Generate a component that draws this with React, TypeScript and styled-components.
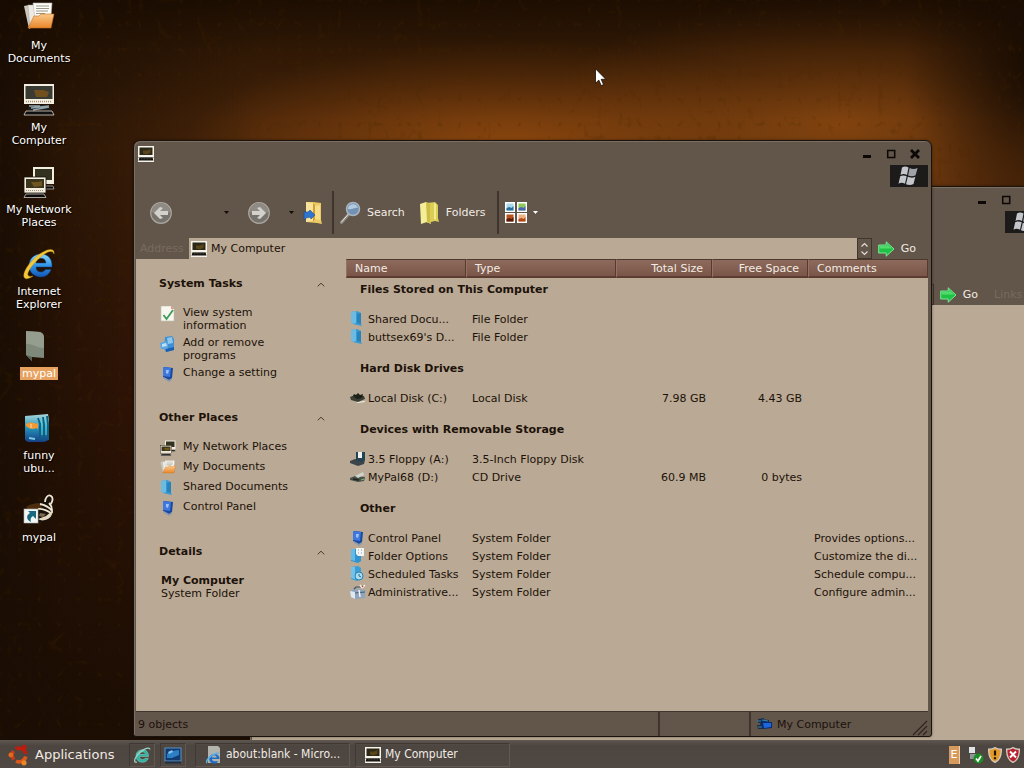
import React from "react";
import styled, { createGlobalStyle } from "styled-components";

const color = {
  chrome: "#62554a",
  chromeDark: "#40352c",
  edge: "#1b120c",
  paper: "#baa994",
  ink: "#1c120a",
  light: "#f1ebe4",
};

const GlobalStyle = createGlobalStyle`
  *, *::before, *::after { box-sizing: border-box; }
  html, body, #root { height: 100%; margin: 0; }
  body { overflow: hidden; background: #170b02; }
  body, button, input, table {
    font-family: "DejaVu Sans", Verdana, sans-serif;
    font-size: 11px;
    line-height: 13px;
    color: ${color.ink};
  }
  button { background: none; border: 0; padding: 0; margin: 0; cursor: default; }
  a { color: inherit; text-decoration: none; }
  svg { display: block; flex: none; }
  h2 { margin: 0; font-size: 11px; line-height: 16px; font-weight: bold; }
`;

/* ---------- icons ---------- */

type IconProps = { size?: number };

const Computer = ({ size = 16 }: IconProps) => (
  <svg width={size} height={size} viewBox="0 0 32 32" aria-hidden="true">
    <rect x="0" y="0" width="32" height="22" fill="#f6f3ea" />
    <rect x="3" y="3" width="26" height="15" fill="#2b2817" />
    <path d="M10 9h8l7-3v8l-8 3-7-2z" fill="#6b4f1c" opacity=".75" />
    <rect x="0" y="23" width="32" height="9" fill="#f6f3ea" />
    <path d="M3 23h26l2 6H1z" fill="#15130f" />
    <path d="M6 25.500h20" stroke="#6d6a62" strokeWidth="1" strokeDasharray="2 1" />
  </svg>
);

const Laptop = ({ size = 32 }: IconProps) => (
  <svg width={size} height={size} viewBox="0 0 32 32" aria-hidden="true">
    <rect x="1" y="0" width="30" height="20" fill="#f3eee2" />
    <rect x="2.500" y="2" width="27" height="13" fill="#3a3b32" />
    <path d="M11 6h9l6 2-2 5H13z" fill="#8a5a14" opacity=".7" />
    <path d="M3 17.500h26" stroke="#a98d6b" strokeWidth="1.500" strokeDasharray="1 1" />
    <path d="M8 21h17l3 5H4z" fill="#1c1f20" />
    <path d="M8 24l18-2M10 26l16-3M6 22h11" stroke="#93a3aa" strokeWidth="1.300" />
    <path d="M3 27h26l2 4H1z" fill="#101010" stroke="#dcd7cc" strokeWidth=".8" />
  </svg>
);

const Network = ({ size = 16 }: IconProps) => (
  <svg width={size} height={size} viewBox="0 0 32 32" aria-hidden="true">
    <path d="M20 20h10l1 3H19z" fill="#0d0c0a" stroke="#ddd" strokeWidth=".6" />
    <rect x="10" y="1" width="21" height="17" fill="#f3eee2" />
    <rect x="12" y="3" width="17" height="11" fill="#33311f" />
    <rect x="1" y="11" width="22" height="16" fill="#f3eee2" stroke="#17120c" strokeWidth=".8" />
    <rect x="3" y="13" width="18" height="9" fill="#3b351d" />
    <path d="M8 16h7l4-1v5l-8 1z" fill="#86641f" opacity=".7" />
    <path d="M3 24.500h18" stroke="#a98d6b" strokeDasharray="1 1" />
    <path d="M3 28h18l2 3.500H1z" fill="#0d0c0a" stroke="#ddd" strokeWidth=".7" />
  </svg>
);

const Documents = ({ size = 16 }: IconProps) => (
  <svg width={size} height={size} viewBox="0 0 32 32" aria-hidden="true">
    <defs>
      <linearGradient id="docFolder" x1="0" y1="0" x2="0" y2="1">
        <stop offset="0" stopColor="#fbc98b" />
        <stop offset="1" stopColor="#e8862a" />
      </linearGradient>
    </defs>
    <path d="M1 4l5-1 3 22-3 2z" fill="#c9c7bf" />
    <path d="M5 3l9 0-1 20-6 3z" fill="#eceae3" stroke="#a9a59a" strokeWidth=".5" />
    <path d="M10 1h19l-1 13-16 3z" fill="#fdfcf7" stroke="#bdb8ac" strokeWidth=".6" />
    <path d="M13 4h13M13 6.500h13M13 9h12M13 11.500h9" stroke="#9b968b" strokeWidth="1" />
    <path d="M11 14l5 0 2-2h13l-3 14H5z" fill="url(#docFolder)" stroke="#c5701e" strokeWidth=".6" />
  </svg>
);

const Explorer = ({ size = 32 }: IconProps) => (
  <svg width={size} height={size} viewBox="0 0 32 32" aria-hidden="true">
    <defs>
      <linearGradient id="ieBlue" x1="0" y1="0" x2="0" y2="1">
        <stop offset="0" stopColor="#8fdcff" />
        <stop offset=".5" stopColor="#2e93e6" />
        <stop offset="1" stopColor="#1457b5" />
      </linearGradient>
    </defs>
    <path
      d="M29 19H13c0 3 2 5 5 5 2 0 3.500-1 4.500-2.500H28C26.500 26 23 29 18 29 11 29 6 24 6 17.500S11 6 18 6s11.500 5 11 13zM13 15h10c-.3-3-2-4.700-5-4.700S13.400 12 13 15z"
      fill="url(#ieBlue)"
      stroke="#0e3f86"
      strokeWidth=".5"
    />
    <path
      d="M31 6c1-5-4-6-11-2C9 10-1 24 1 29c1 3 5 2 9-1-4 1-6 0-5-3C7 19 17 8 25 4c3-1 5-1 6 2z"
      fill="#f3c73a"
      stroke="#b98a14"
      strokeWidth=".4"
    />
  </svg>
);

const GreyFolder = () => (
  <svg width="32" height="32" viewBox="0 0 32 32" aria-hidden="true">
    <path d="M3 1l14 1c3 1 4 3 4 6v20l-12-1v4l-6-6z" fill="#7f897b" />
    <path d="M3 1l14 1c3 1 4 3 4 6v10C13 18 8 13 3 14z" fill="#9aa394" opacity=".8" />
    <path d="M9 27v4l-6-6z" fill="#566053" />
  </svg>
);

const Picture = () => (
  <svg width="32" height="32" viewBox="0 0 32 32" aria-hidden="true">
    <defs>
      <linearGradient id="fishSea" x1="0" y1="0" x2="0" y2="1">
        <stop offset="0" stopColor="#a9d6da" />
        <stop offset=".5" stopColor="#2393b8" />
        <stop offset="1" stopColor="#173d86" />
      </linearGradient>
    </defs>
    <path d="M2 4l23-2 1 6v20l-5 2H5l-3-2z" fill="url(#fishSea)" />
    <path d="M15 6l2 6v16M20 5l1 8v16M24 4l1 8v15" fill="none" stroke="#0c5f80" strokeWidth="1.800" />
    <path d="M18 7l1 6v10M22 6l1 7v10" stroke="#5fd0dc" fill="none" strokeWidth="1" />
    <path d="M3 12c3-2 7-2 10 0l2-1v6l-2-1c-3 2-7 1-10-2z" fill="#f19a35" />
    <path d="M8 12v4" stroke="#ffe0b0" />
    <path d="M6 26l6 1" stroke="#77cbe0" strokeWidth="2" />
  </svg>
);

const Raccoon = () => (
  <svg width="32" height="32" viewBox="0 0 32 32" aria-hidden="true">
    <path d="M3 13c4-4 12-6 19-5l2-6c3-1 5 1 5 5v16c-5 6-14 6-18 1z" fill="#17120c" />
    <path d="M3 13c4-3 9-4 14-4l2 5-14 2z" fill="#4d2b0d" />
    <path d="M22 8c0-4 3-8 6-6 3 2 1 7-1 9" fill="none" stroke="#efe6d2" strokeWidth="1.800" />
    <path d="M17 10c5 1 9 3 12 7 0-4-1-6-3-8M15 15c4-1 8 1 13 4" fill="none" stroke="#efe6d2" strokeWidth="1.800" />
    <path d="M29 17c1 4-2 8-7 9-3 1-5 0-7-1l8-3z" fill="#e2d8c2" />
    <path d="M17 19l6 1-3 3-4-1z" fill="#7d6a4a" />
    <rect x="1" y="15" width="14" height="14" fill="#f4f6f4" stroke="#a8b4b4" strokeWidth=".6" />
    <path d="M5 17h8v8l-3-3c-2 1-3 3-2 6-5-2-5-7-1-9z" fill="#196a80" />
  </svg>
);

const BlueFolder = () => (
  <svg width="16" height="16" viewBox="0 0 16 16" aria-hidden="true">
    <path d="M1 1l6-1 4 2v11l1 2-5-1-4-1-2-2z" fill="#3a9bd3" />
    <path d="M1 1l5-1v12l-3 1-2-2z" fill="#6ebbe2" />
    <path d="M7 3l4-1v11l-4-1z" fill="#2583be" />
  </svg>
);

const ControlPanel = () => (
  <svg width="16" height="16" viewBox="0 0 16 16" aria-hidden="true">
    <path d="M4 1l9 1-1 10-3 2-6-3z" fill="#17499f" />
    <path d="M3 1l8 1-1 9-7-1z" fill="#3e78dd" />
    <path d="M6 4l3 0-1 4-2-1z" fill="#9cc2f6" />
    <path d="M4 12l5 3 3-2" stroke="#8c98ae" strokeWidth="1.500" fill="none" />
  </svg>
);

const CheckSheet = () => (
  <svg width="16" height="16" viewBox="0 0 16 16" aria-hidden="true">
    <path d="M1 0h10l3 3v12H1z" fill="#f7f7f0" stroke="#c4bfb2" strokeWidth=".6" />
    <path d="M11 0l3 3h-3z" fill="#e39086" />
    <path d="M3.500 9l3 4L13 4" fill="none" stroke="#3f9a55" strokeWidth="1.800" />
  </svg>
);

const Programs = () => (
  <svg width="16" height="16" viewBox="0 0 16 16" aria-hidden="true">
    <path d="M5 1l7-1 2 3v11l-8 2-2-3z" fill="#3f8fd6" />
    <path d="M7 2l5-1 1 6-5 1z" fill="#8fc6ec" />
    <path d="M0 7l6-2 2 2v6l-7 0z" fill="#5ba6e0" />
    <path d="M6 13l8-2v3l-8 2z" fill="#1b5fae" />
    <path d="M2 8l4-1 1 3-5 1z" fill="#bfe0f5" />
  </svg>
);

const FolderOptions = () => (
  <svg width="16" height="16" viewBox="0 0 16 16" aria-hidden="true">
    <path d="M1 1l8 0 2 1v11l-3 2-7-2z" fill="#2e95d1" />
    <path d="M1 1h4v12l-4-1z" fill="#63bbe6" />
    <path d="M6 0h8v8H8l-2-2z" fill="#f3f5f2" />
    <path d="M8 2h1M11 2h1M8 5h1M11 5h1" stroke="#7fa3c4" strokeWidth="1.200" />
  </svg>
);

const Scheduled = () => (
  <svg width="16" height="16" viewBox="0 0 16 16" aria-hidden="true">
    <path d="M1 1l7-1 3 2v11l-4 2-6-2z" fill="#3b9fd6" />
    <path d="M1 1l4 0v12l-4-1z" fill="#74c2e8" />
    <circle cx="9" cy="10" r="4" fill="#a9dbf1" stroke="#2781b5" />
    <path d="M9 8v2l2 1" stroke="#2c6c92" fill="none" />
  </svg>
);

const Admin = () => (
  <svg width="16" height="16" viewBox="0 0 16 16" aria-hidden="true">
    <path d="M0 7l4-2 11 1v8l-10 1-4-2z" fill="#8fa4bd" />
    <path d="M0 7l5 1v7l-4-2z" fill="#dfe8ef" />
    <path d="M4 5l2-2h5l1 2" fill="none" stroke="#3c4e66" strokeWidth="1.200" />
    <path d="M5 9l10-1" stroke="#3f5c80" />
    <path d="M9 6l1 7" stroke="#f5f5f5" strokeWidth="1.500" />
    <path d="M10 1l2 3 3-3" stroke="#f1eeea" fill="none" strokeWidth="1.500" />
    <path d="M12 3l1-1" stroke="#c33f37" strokeWidth="1.200" />
  </svg>
);

type DriveKind = "disk" | "floppy" | "cd";

const Drive = ({ kind }: { kind: DriveKind }) => (
  <svg width="16" height="16" viewBox="0 0 16 16" aria-hidden="true">
    {kind === "disk" && (
      <>
        <path d="M6 12l9-1v1l-7 1z" fill="#e8efe2" />
        <path d="M0 7l5-2 9 1 1 3-7 3-7-2z" fill="#3b3f33" />
        <path d="M3 6l1-2 2 1 2-2 2 2 3-1-1 4-5 1z" fill="#1d2016" />
      </>
    )}
    {kind === "floppy" && (
      <>
        <path d="M0 10l5-2 10 1-1 4-6 2-8-3z" fill="#3c464a" />
        <path d="M6 1h9v8l-4 2-5-1z" fill="#27434f" />
        <path d="M8 1h4v6H8z" fill="#eef2f2" />
      </>
    )}
    {kind === "cd" && (
      <>
        <path d="M0 9l5-2 10 1-1 4-6 1-8-2z" fill="#4b5148" />
        <path d="M5 7l8-4 1 3-6 3z" fill="#cdd5cc" />
        <path d="M3 10l6 1" stroke="#1f241f" strokeWidth="1.500" />
        <path d="M11 11l3-1" stroke="#6fc07a" />
      </>
    )}
  </svg>
);

const NavArrow = ({ forward }: { forward?: boolean }) => (
  <svg width="22" height="22" viewBox="0 0 22 22" aria-hidden="true">
    <circle cx="11" cy="11" r="10.300" fill="#77736c" stroke="#aaa7a0" strokeWidth="1.200" />
    <path d="M2 10a9 9 0 0 1 18 0c-5 3-13 3-18 0z" fill="#8f8b84" />
    <path
      d={forward ? "M4 9h8L9 6l3-1 6 6-6 6-3-1 3-3H4z" : "M18 9h-8l3-3-3-1-6 6 6 6 3-1-3-3h8z"}
      fill="#d3d1cc"
    />
  </svg>
);

const UpFolder = () => (
  <svg width="20" height="24" viewBox="0 0 20 24" aria-hidden="true">
    <path d="M3 1l7 0 8 1v17l1 4-5-1-11-1z" fill="#eecb62" />
    <path d="M3 1l7 1v18l-7 1z" fill="#f8e29a" />
    <path d="M12 5l5-1v15l-5-1z" fill="#f7dd8a" />
    <path d="M10 2l2 2v14l-2 3z" fill="#cf9f36" />
    <path d="M1 11h4l2-2 5 5-4 4-1-2-4 1-2 2z" fill="#2f74cf" stroke="#1a4c98" strokeWidth=".6" />
  </svg>
);

const Magnifier = () => (
  <svg width="21" height="24" viewBox="0 0 21 24" aria-hidden="true">
    <path d="M9 13L1.500 21.500" stroke="#8e8c87" strokeWidth="3" strokeLinecap="round" />
    <path d="M8.500 13L1.500 21" stroke="#e6e4df" strokeWidth="1" strokeLinecap="round" />
    <circle cx="13" cy="8" r="6.500" fill="#7392b3" stroke="#a9b4bf" strokeWidth="1.500" />
    <path d="M8 8c0-5 8-7 10-1-3-1-6 2-10 1z" fill="#b3c9de" />
  </svg>
);

const YellowFolders = () => (
  <svg width="20" height="24" viewBox="0 0 20 24" aria-hidden="true">
    <path d="M7 2l8-1 3 3v13l1 4-4-1-8 2z" fill="#d9cd55" />
    <path d="M0 3l6-2 4 2v16l1 4-4-2-6 2z" fill="#f5ee98" />
    <path d="M6 1l4 2v16l1 4-4-2z" fill="#cdbc45" />
    <path d="M14 2l2 1v16l-2-1z" fill="#f2ea8e" />
  </svg>
);

const Views = () => (
  <svg width="22" height="21" viewBox="0 0 22 21" aria-hidden="true">
    {[
      [0, 0, "#a9d8ec", "#2a6f9c"],
      [12, 0, "#8cc95b", "#4c62b9"],
      [0, 11, "#b8511d", "#571d0b"],
      [12, 11, "#ecb083", "#b0481a"],
    ].map(([x, y, a, b]) => (
      <g key={`${x}-${y}`} transform={`translate(${x} ${y})`}>
        <rect width="10" height="10" fill="#fff" />
        <rect x="1.500" y="1.500" width="7" height="7" fill={a as string} />
        <path d="M1.500 8.500V6l3-1 2 1 2-2v4.500z" fill={b as string} />
      </g>
    ))}
  </svg>
);

const GoArrow = () => (
  <svg width="17" height="16" viewBox="0 0 17 16" aria-hidden="true">
    <path d="M.7 4h7.500V.8L16 8l-7.800 7.200V12H.7z" fill="#1fc246" stroke="#7fe596" strokeWidth="1" />
    <path d="M1.500 5h7.500V3l5 4.500H1.500z" fill="#54d96f" />
  </svg>
);

const WinFlag = () => (
  <svg width="22" height="20" viewBox="0 0 22 20" aria-hidden="true">
    <g fill="#c3c6ca">
      <path d="M4 1.500c2.500-1.500 4.500-1 6.500 0L9 9c-2-1-4.500-1.500-6.500 0z" />
      <path d="M11.600 2c2.500 1.200 5 1.400 8 0l-2 7.300c-2.500 1.300-5 1.200-7.500.2z" fill="#9ea1a6" />
      <path d="M2.200 10.300c2.200-1.400 4.500-1 6.500 0L7 17.700c-2-1-4.300-1.500-6.500 0z" />
      <path d="M9.800 10.800c2.500 1 5 1.200 7.500 0L15.500 18c-2.500 1.300-5 1.200-7.500.2z" />
    </g>
  </svg>
);

const UbuntuLogo = () => (
  <svg width="22" height="22" viewBox="0 0 22 22" aria-hidden="true">
    <g fill="none" strokeWidth="3.600">
      <path d="M7.500 5A7 7 0 0 1 17.800 10" stroke="#b8200f" />
      <path d="M17.800 12.500A7 7 0 0 1 8 17.200" stroke="#d9581a" />
      <path d="M6 15.500A7 7 0 0 1 5.500 7" stroke="#c63d16" />
    </g>
    <circle cx="2.800" cy="11" r="2.400" fill="#e26a1c" />
    <circle cx="16" cy="3.400" r="2.600" fill="#b81d12" />
    <circle cx="16" cy="18.800" r="2.600" fill="#e9872a" />
  </svg>
);

const Desk = () => (
  <svg width="18" height="18" viewBox="0 0 18 18" aria-hidden="true">
    <rect x="1" y="2" width="16" height="13" fill="#123a70" stroke="#5a93c4" strokeWidth="1" />
    <path d="M3 8l4-3 8-1v5l-7 3H3z" fill="#2c7fc4" />
    <path d="M4 6l4-2 1 2-4 2z" fill="#86c2e8" />
    <path d="M1 16.500h16" stroke="#1d2e40" strokeWidth="2" />
  </svg>
);

const PageIE = () => (
  <svg width="17" height="18" viewBox="0 0 17 18" aria-hidden="true">
    <path d="M3 0h10l2 2v15H3z" fill="#b3b4ae" />
    <path d="M14.500 13H7c0 1.400 1 2.200 2.300 2.200h4C12.500 16.800 11 17.500 9.200 17.500 6 17.500 4.200 15.500 4.200 12.700S6 8 9.200 8s5.500 2 5.300 5zM7 11.400h4.700C11.500 10.200 10.700 9.600 9.300 9.600 8 9.600 7.200 10.200 7 11.400z" fill="#1f6cc4" />
    <path d="M2 17C0 14 8 7 14 7" fill="none" stroke="#5fb2e8" strokeWidth="1.400" />
  </svg>
);

const TaskIE = () => (
  <svg width="18" height="18" viewBox="0 0 18 18" aria-hidden="true">
    <path d="M15.500 10.500H6.500c0 2 1.200 3 3 3 1.300 0 2-.5 2.600-1.300h3.200C14.400 15 12.300 16.300 9.500 16.300 5.600 16.300 3 13.800 3 10s2.600-6.200 6.500-6.200 6.300 2.700 6 6.700zM6.600 8.300h5.800C12.200 6.800 11.200 6 9.500 6 7.900 6 6.900 6.800 6.600 8.300z" fill="#2fb5a4" stroke="#b5ddd2" strokeWidth=".4" />
    <path d="M17 3.500C16.500 0 7 4 3 11c-2 3-2 6 1 5" fill="none" stroke="#9ad6c4" strokeWidth="1.300" />
  </svg>
);

const TrayNet = () => (
  <svg width="16" height="18" viewBox="0 0 16 18" aria-hidden="true">
    <rect x="1" y="1" width="6" height="6" fill="#dfe3e6" />
    <path d="M2 8h6v5H2z" fill="#8f9499" />
    <circle cx="10.500" cy="12.500" r="5" fill="#1c8c25" />
    <path d="M8 12.500l2 2.500 3-5" fill="none" stroke="#fff" strokeWidth="1.600" />
  </svg>
);

const Shield = ({ alert }: { alert?: boolean }) => (
  <svg width="14" height="16" viewBox="0 0 14 16" aria-hidden="true">
    <path d="M7 .7c2 1.300 4 1.700 6.300 1.600C13.500 9 12 13 7 15.400 2 13 .5 9 .7 2.300 3 2.400 5 2 7 .7z" fill={alert ? "#b8202f" : "#e59a2a"} stroke="#d3c8bb" strokeWidth="1.400" />
    {alert ? (
      <path d="M4 4.500l6 6M10 4.500l-6 6" stroke="#fff" strokeWidth="2" />
    ) : (
      <path d="M7 3.500v5M7 10.300v2" stroke="#1e1405" strokeWidth="2.200" />
    )}
  </svg>
);

const StatusComputer = () => (
  <svg width="16" height="14" viewBox="0 0 16 14" aria-hidden="true">
    <path d="M1 2l6-1v5H1zM0 8h6v4H1z" fill="#1f2f3f" />
    <path d="M4 2l8 1 0 2 3 0 0 6-9 1-3-3z" fill="#0e2b66" />
    <path d="M6 6l8 0 0 4-7 1z" fill="#1c66e0" />
    <path d="M0 4l4 0M1 10h4M5 3l6 1" stroke="#3b86a9" strokeWidth="1.200" />
  </svg>
);

const Caret = ({ tone = "#120c07" }: { tone?: string }) => (
  <svg width="5" height="3" viewBox="0 0 5 3" aria-hidden="true">
    <path d="M0 0h5L2.500 3z" fill={tone} />
  </svg>
);

const Chevron = () => (
  <svg width="8" height="5" viewBox="0 0 8 5" aria-hidden="true">
    <path d="M.7 4.300L4 1.200l3.300 3.100" fill="none" stroke="#4b3e33" strokeWidth="1" />
  </svg>
);

/* ---------- desktop ---------- */

const Screen = styled.div`
  height: 100vh;
  display: flex;
  flex-direction: column;
  overflow: hidden;
`;

const Desktop = styled.main`
  position: relative;
  flex: 1;
  min-height: 0;
  overflow: hidden;
  background:
    linear-gradient(to bottom, rgba(22, 10, 1, 0.75) 0, rgba(22, 10, 1, 0.3) 50px, rgba(22, 10, 1, 0) 120px),
    linear-gradient(to right, #1a0d03 0, rgba(26, 13, 3, 0.7) 60px, rgba(26, 13, 3, 0) 260px),
    radial-gradient(ellipse 140px 160px at 102% 70px, #150a02 0, rgba(21, 10, 2, 0) 100%),
    radial-gradient(ellipse 300px 130px at 82% 125px, #81430f 0, rgba(129, 67, 15, 0) 100%),
    radial-gradient(ellipse 330px 110px at 50% 150px, #8c470e 0, rgba(140, 71, 14, 0) 100%),
    linear-gradient(to bottom, #321a05 0, #4b260a 150px, #3a1607 420px, #1f0e03 700px);
`;

const Leather = styled.svg`
  position: absolute;
  inset: 0;
  width: 100%;
  height: 100%;
  opacity: 0.3;
`;

const IconColumn = styled.nav`
  position: relative;
  width: 78px;
  padding-top: 1px;
  display: flex;
  flex-direction: column;
`;

const DesktopButton = styled.button`
  height: 82px;
  padding-top: 1px;
  display: flex;
  flex-direction: column;
  align-items: center;
  gap: 5px;
  color: #fff;
`;

const DesktopLabel = styled.span<{ $selected?: boolean }>`
  padding: 0 2px;
  white-space: pre-line;
  text-align: center;
  text-shadow: ${(p) => (p.$selected ? "none" : "1px 1px 1px #000")};
  background: ${(p) => (p.$selected ? "#e7a260" : "transparent")};
`;

const Pointer = styled.svg`
  position: absolute;
  left: 595px;
  top: 68px;
`;

/* ---------- window ---------- */

const Frame = styled.section<{ $back?: boolean }>`
  position: absolute;
  left: ${(p) => (p.$back ? 249 : 133)}px;
  right: ${(p) => (p.$back ? -23 : 92)}px;
  top: ${(p) => (p.$back ? 186 : 140)}px;
  bottom: ${(p) => (p.$back ? -43 : 3)}px;
  display: flex;
  flex-direction: column;
  padding: 1px 3px 0 2px;
  border: 1px solid ${color.edge};
  border-radius: 7px 7px 3px 3px;
  background: ${color.chrome};
  box-shadow: inset 1px 1px 0 #7b6e62, 0 0 3px rgba(0, 0, 0, 0.4);
`;

const TitleBar = styled.header`
  height: 23px;
  padding: 0 7px 0 2px;
  display: flex;
  align-items: center;
  justify-content: space-between;
`;

const TitleButtons = styled.div`
  display: flex;
  gap: 12px;
`;

const TitleButton = styled.button`
  width: 12px;
  height: 12px;
`;

const MenuRow = styled.div`
  height: 22px;
  display: flex;
  justify-content: flex-end;
`;

const LogoBox = styled.div`
  width: 38px;
  display: grid;
  place-items: center;
  background: #1d1b1a;
`;

const Toolbar = styled.div`
  height: 51px;
  padding-left: 14px;
  display: flex;
  align-items: center;
`;

const ToolButton = styled.button<{ $gap?: number }>`
  display: flex;
  align-items: center;
  gap: 6px;
  margin-left: ${(p) => p.$gap ?? 0}px;
  color: ${color.light};
`;

const Divider = styled.span<{ $gap?: number }>`
  align-self: stretch;
  width: 2px;
  margin: 4px 0 4px ${(p) => p.$gap ?? 0}px;
  background: ${color.chromeDark};
`;

const AddressBar = styled.form`
  height: 21px;
  display: flex;
  align-items: center;
`;

const Faded = styled.label`
  width: 53px;
  padding-left: 4px;
  color: #776b5f;
`;

const AddressField = styled.div`
  flex: 1;
  min-width: 0;
  align-self: stretch;
  display: flex;
  align-items: center;
  gap: 4px;
  padding-left: 2px;
  background: ${color.paper};
`;

const AddressInput = styled.input`
  flex: 1;
  min-width: 0;
  padding: 0;
  border: 0;
  outline: 0;
  background: transparent;
`;

const Spinner = styled.button`
  width: 15px;
  align-self: stretch;
  display: grid;
  place-items: center;
  border: 1px solid ${color.chromeDark};
`;

const GoButton = styled.button`
  display: flex;
  align-items: center;
  gap: 6px;
  padding: 0 12px 0 6px;
  color: ${color.light};
`;

const Body = styled.div`
  flex: 1;
  min-height: 0;
  display: flex;
  background: ${color.paper};
`;

const StatusBar = styled.footer`
  height: 25px;
  display: flex;
  align-items: stretch;
  border-top: 1px solid ${color.chromeDark};
`;

const StatusText = styled.span<{ $width?: number }>`
  flex: ${(p) => (p.$width ? `0 0 ${p.$width}px` : "1")};
  display: flex;
  align-items: center;
  gap: 4px;
  padding-left: ${(p) => (p.$width ? 6 : 2)}px;
  border-left: ${(p) => (p.$width ? `2px solid ${color.chromeDark}` : "0")};
`;

const Grip = styled.svg`
  align-self: flex-end;
`;

/* ---------- task pane ---------- */

const Pane = styled.aside`
  flex: none;
  width: 210px;
  padding: 17px 21px 0 23px;
  display: flex;
  flex-direction: column;
  gap: 28px;
`;

const PaneHeading = styled.div`
  display: flex;
  justify-content: space-between;
  align-items: center;
  margin-bottom: 14px;
`;

const PaneList = styled.ul`
  margin: 0;
  padding: 0 0 0 1px;
  list-style: none;
  display: flex;
  flex-direction: column;
  gap: 4px;
`;

const PaneLink = styled.a`
  min-height: 16px;
  display: flex;
  gap: 7px;
`;

const PaneLabel = styled.span`
  width: 112px;
`;

const Details = styled.p`
  margin: 0;
  padding-left: 2px;
`;

/* ---------- file list ---------- */

const ListArea = styled.div`
  flex: 1;
  min-width: 0;
`;

const FileTable = styled.table`
  width: 100%;
  table-layout: fixed;
  border-collapse: separate;
  border-spacing: 0;
  white-space: nowrap;
`;

const Column = styled.col<{ $width?: number }>`
  width: ${(p) => (p.$width ? `${p.$width}px` : "auto")};
`;

const HeadCell = styled.th<{ $right?: boolean }>`
  height: 19px;
  padding: 1px 8px 0;
  text-align: ${(p) => (p.$right ? "right" : "left")};
  font-weight: normal;
  color: ${color.light};
  background: linear-gradient(#8d6a5b, #7a5648);
  border-top: 1px solid #4d382e;
  border-bottom: 2px solid #5c3c30;
  border-left: 1px solid #957263;
  border-right: 1px solid #553a2f;
`;

const GroupCell = styled.th<{ $first?: boolean }>`
  padding: ${(p) => (p.$first ? 3 : 14)}px 0 11px 14px;
  line-height: 18px;
  text-align: left;
`;

const Cell = styled.td<{ $right?: boolean }>`
  height: 18px;
  padding: 0 6px;
  text-align: ${(p) => (p.$right ? "right" : "left")};
`;

const NameCell = styled(Cell)`
  padding: 0 0 0 4px;
`;

const FileName = styled.span`
  display: flex;
  align-items: center;
  gap: 2px;
`;

/* ---------- taskbar ---------- */

const Taskbar = styled.footer`
  flex: none;
  height: 28px;
  display: flex;
  align-items: center;
  padding: 0 4px 0 8px;
  background: linear-gradient(#5b534d, #4c4540 5px, #4f4843);
  border-top: 1px solid #5f564f;
`;

const StartButton = styled.button`
  display: flex;
  align-items: center;
  gap: 5px;
  width: 121px;
  font-size: 13px;
  line-height: 16px;
  color: ${color.light};
`;

const TaskGroup = styled.div<{ $gap: number }>`
  display: flex;
  gap: ${(p) => p.$gap}px;
  margin-right: 9px;
`;

const TaskButton = styled.button<{ $wide?: boolean }>`
  width: ${(p) => (p.$wide ? 155 : 26)}px;
  height: 24px;
  padding: 0 ${(p) => (p.$wide ? 9 : 3)}px;
  display: flex;
  align-items: center;
  gap: 4px;
  font-family: "DejaVu Sans Condensed", "DejaVu Sans", sans-serif;
  font-size: 12px;
  color: ${color.light};
  white-space: nowrap;
  border: 1px solid #635950;
  border-left-color: #3f3833;
  border-top-color: #3f3833;
`;

const Tray = styled.div`
  margin-left: auto;
  display: flex;
  align-items: center;
  gap: 4px;
`;

const Language = styled.button`
  width: 11px;
  height: 18px;
  margin-right: 4px;
  color: #fff;
  background: #d69a5c;
  border-right: 1px solid #efd0ab;
`;

/* ---------- data ---------- */

const shortcuts: { label: string; icon: React.ReactNode; selected?: boolean }[] = [
  { label: "My\nDocuments", icon: <Documents size={32} /> },
  { label: "My\nComputer", icon: <Laptop /> },
  { label: "My Network\nPlaces", icon: <Network size={32} /> },
  { label: "Internet\nExplorer", icon: <Explorer /> },
  { label: "mypal", icon: <GreyFolder />, selected: true },
  { label: "funny\nubu...", icon: <Picture /> },
  { label: "mypal", icon: <Raccoon /> },
];

const paneSections = [
  {
    title: "System Tasks",
    items: [
      { label: "View system information", icon: <CheckSheet /> },
      { label: "Add or remove programs", icon: <Programs /> },
      { label: "Change a setting", icon: <ControlPanel /> },
    ],
  },
  {
    title: "Other Places",
    items: [
      { label: "My Network Places", icon: <Network /> },
      { label: "My Documents", icon: <Documents /> },
      { label: "Shared Documents", icon: <BlueFolder /> },
      { label: "Control Panel", icon: <ControlPanel /> },
    ],
  },
];

type FileRow = {
  name: string;
  type: string;
  icon: React.ReactNode;
  size?: string;
  free?: string;
  comment?: string;
};

const groups: { title: string; rows: FileRow[] }[] = [
  {
    title: "Files Stored on This Computer",
    rows: [
      { name: "Shared Docu...", type: "File Folder", icon: <BlueFolder /> },
      { name: "buttsex69's D...", type: "File Folder", icon: <BlueFolder /> },
    ],
  },
  {
    title: "Hard Disk Drives",
    rows: [
      { name: "Local Disk (C:)", type: "Local Disk", icon: <Drive kind="disk" />, size: "7.98 GB", free: "4.43 GB" },
    ],
  },
  {
    title: "Devices with Removable Storage",
    rows: [
      { name: "3.5 Floppy (A:)", type: "3.5-Inch Floppy Disk", icon: <Drive kind="floppy" /> },
      { name: "MyPal68 (D:)", type: "CD Drive", icon: <Drive kind="cd" />, size: "60.9 MB", free: "0 bytes" },
    ],
  },
  {
    title: "Other",
    rows: [
      { name: "Control Panel", type: "System Folder", icon: <ControlPanel />, comment: "Provides options..." },
      { name: "Folder Options", type: "System Folder", icon: <FolderOptions />, comment: "Customize the di..." },
      { name: "Scheduled Tasks", type: "System Folder", icon: <Scheduled />, comment: "Schedule compu..." },
      { name: "Administrative...", type: "System Folder", icon: <Admin />, comment: "Configure admin..." },
    ],
  },
];

/* ---------- parts ---------- */

const glyphs: [string, React.ReactNode][] = [
  ["Minimize", <path key="m" d="M2 7h8v3H2z" fill="#0c0805" />],
  ["Maximize", <path key="x" d="M2.700 2.500h7v7h-7zM2 2.500h8.500" fill="none" stroke="#0c0805" strokeWidth="1.500" />],
  ["Close", <path key="c" d="M2 2l8 8M10 2l-8 8" stroke="#0c0805" strokeWidth="2.800" />],
];

function WindowChrome({
  id,
  title,
  back,
  children,
}: {
  id: string;
  title: string;
  back?: boolean;
  children?: React.ReactNode;
}) {
  return (
    <Frame $back={back} aria-label={title}>
      <TitleBar>
        <Computer />
        <TitleButtons>
          {glyphs.map(([name, glyph]) => (
            <TitleButton key={name} type="button" aria-label={name}>
              <svg width="12" height="12" viewBox="0 0 12 12">{glyph}</svg>
            </TitleButton>
          ))}
        </TitleButtons>
      </TitleBar>
      <MenuRow>
        <LogoBox>
          <WinFlag />
        </LogoBox>
      </MenuRow>
      <Toolbar>
        {!back && (
          <>
            <ToolButton type="button" aria-label="Back"><NavArrow /></ToolButton>
            <ToolButton type="button" aria-label="Back history" $gap={52}><Caret /></ToolButton>
            <ToolButton type="button" aria-label="Forward" $gap={19}><NavArrow forward /></ToolButton>
            <ToolButton type="button" aria-label="Forward history" $gap={19}><Caret /></ToolButton>
            <ToolButton type="button" aria-label="Up" $gap={9}><UpFolder /></ToolButton>
            <Divider $gap={9} />
            <ToolButton type="button" $gap={6}><Magnifier />Search</ToolButton>
            <ToolButton type="button" $gap={15}><YellowFolders />Folders</ToolButton>
            <Divider $gap={11} />
            <ToolButton type="button" aria-label="Views" $gap={6}>
              <Views />
              <Caret tone="#fff" />
            </ToolButton>
          </>
        )}
      </Toolbar>
      <AddressBar onSubmit={(e) => e.preventDefault()}>
        <Faded htmlFor={id}>Address</Faded>
        <AddressField>
          <Computer />
          <AddressInput id={id} defaultValue={title} />
        </AddressField>
        <Spinner type="button" aria-label="Address history">
          <svg width="9" height="14" viewBox="0 0 9 14">
            <path d="M1.500 4.500l3-3 3 3M1.500 9.500l3 3 3-3" fill="none" stroke="#e5dcd2" strokeWidth="1.200" />
          </svg>
        </Spinner>
        <GoButton type="submit"><GoArrow />Go</GoButton>
        {back && <Faded as="span">Links</Faded>}
      </AddressBar>
      <Body>{children}</Body>
      {!back && (
        <StatusBar>
          <StatusText>9 objects</StatusText>
          <StatusText $width={91} />
          <StatusText $width={163}>
            <StatusComputer />
            My Computer
          </StatusText>
          <Grip width="16" height="16" viewBox="0 0 16 16" aria-hidden="true">
            <path d="M1 15L15 1M6 15l9-9M11 15l4-4" stroke="#2e251e" strokeWidth="1.200" />
          </Grip>
        </StatusBar>
      )}
    </Frame>
  );
}

function TaskPane() {
  return (
    <Pane>
      {paneSections.map((section) => (
        <section key={section.title}>
          <PaneHeading>
            <h2>{section.title}</h2>
            <button type="button" aria-label={`Collapse ${section.title}`}><Chevron /></button>
          </PaneHeading>
          <PaneList>
            {section.items.map((item) => (
              <li key={item.label}>
                <PaneLink href="#">
                  {item.icon}
                  <PaneLabel>{item.label}</PaneLabel>
                </PaneLink>
              </li>
            ))}
          </PaneList>
        </section>
      ))}
      <section>
        <PaneHeading>
          <h2>Details</h2>
          <button type="button" aria-label="Collapse Details"><Chevron /></button>
        </PaneHeading>
        <Details>
          <strong>My Computer</strong>
          <br />
          System Folder
        </Details>
      </section>
    </Pane>
  );
}

function FileList() {
  return (
    <ListArea>
      <FileTable>
        <colgroup>
          <Column $width={120} />
          <Column $width={150} />
          <Column $width={96} />
          <Column $width={96} />
          <Column />
        </colgroup>
        <thead>
          <tr>
            <HeadCell scope="col">Name</HeadCell>
            <HeadCell scope="col">Type</HeadCell>
            <HeadCell scope="col" $right>Total Size</HeadCell>
            <HeadCell scope="col" $right>Free Space</HeadCell>
            <HeadCell scope="col">Comments</HeadCell>
          </tr>
        </thead>
        {groups.map((group, index) => (
          <tbody key={group.title}>
            <tr>
              <GroupCell colSpan={5} scope="rowgroup" $first={index === 0}>{group.title}</GroupCell>
            </tr>
            {group.rows.map((row) => (
              <tr key={row.name}>
                <NameCell>
                  <FileName>{row.icon}{row.name}</FileName>
                </NameCell>
                <Cell>{row.type}</Cell>
                <Cell $right>{row.size}</Cell>
                <Cell $right>{row.free}</Cell>
                <Cell>{row.comment}</Cell>
              </tr>
            ))}
          </tbody>
        ))}
      </FileTable>
    </ListArea>
  );
}

export default function App() {
  return (
    <Screen>
      <GlobalStyle />
      <Desktop>
        <Leather aria-hidden="true">
          <filter id="leather" x="0" y="0" width="100%" height="100%">
            <feTurbulence type="turbulence" baseFrequency="0.05 0.04" numOctaves="3" seed="4" />
            <feColorMatrix values="0 0 0 0 0.06  0 0 0 0 0.02  0 0 0 0 0  -4 -2 0 0 1.100" />
          </filter>
          <rect width="100%" height="100%" filter="url(#leather)" />
        </Leather>
        <IconColumn aria-label="Desktop">
          {shortcuts.map((item, index) => (
            <DesktopButton key={index} type="button">
              {item.icon}
              <DesktopLabel $selected={item.selected}>{item.label}</DesktopLabel>
            </DesktopButton>
          ))}
        </IconColumn>
        <WindowChrome id="address-back" title="about:blank" back />
        <WindowChrome id="address-front" title="My Computer">
          <TaskPane />
          <FileList />
        </WindowChrome>
        <Pointer width="12" height="19" viewBox="0 0 12 19" aria-hidden="true">
          <path d="M.5.800v14.500l3.300-3.200 2.400 5.500 2.300-1-2.300-5.300h4.600z" fill="#fff" stroke="#1a0d04" strokeWidth=".8" />
        </Pointer>
      </Desktop>
      <Taskbar>
        <StartButton type="button"><UbuntuLogo />Applications</StartButton>
        <TaskGroup $gap={5}>
          <TaskButton type="button" aria-label="Internet Explorer"><TaskIE /></TaskButton>
          <TaskButton type="button" aria-label="Show desktop"><Desk /></TaskButton>
        </TaskGroup>
        <TaskGroup $gap={5}>
          <TaskButton type="button" $wide><PageIE />about:blank - Micro...</TaskButton>
          <TaskButton type="button" $wide><Computer />My Computer</TaskButton>
        </TaskGroup>
        <Tray>
          <Language type="button">E</Language>
          <TrayNet />
          <Shield />
          <Shield alert />
        </Tray>
      </Taskbar>
    </Screen>
  );
}
